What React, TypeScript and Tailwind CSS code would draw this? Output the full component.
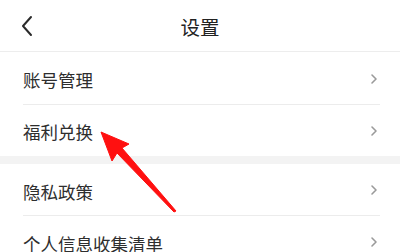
import { ReactNode } from 'react';

const font = { fontFamily: '"Noto Sans CJK SC", "Noto Sans", sans-serif' };

const Chevron = () => (
  <svg width="8" height="12" viewBox="0 0 8 12" className="shrink-0">
    <path d="M2 2 L6 6 L2 10" fill="none" stroke="#9a9a9a" strokeWidth="1.6" strokeLinecap="round" strokeLinejoin="round" />
  </svg>
);

const Row = ({ label, divider, h }: { label: ReactNode; divider?: boolean; h: string }) => (
  <div className={`flex items-center justify-between pl-[23px] pr-[22px] ${h} relative`}>
    <span className="text-[17.5px] text-[#2e2e2e] leading-none pt-[3px]">{label}</span>
    <Chevron />
    {divider && <div className="absolute bottom-0 left-[23px] right-[20px] h-px bg-[#ececec]" />}
  </div>
);

export default function App() {
  return (
    <div className="relative w-[400px] h-[252px] overflow-hidden bg-white" style={font}>
      <div className="flex items-center h-[52px] border-b border-[#ededed] relative">
        <svg width="14" height="22" viewBox="0 0 14 22" className="ml-[20px]">
          <path d="M11 2 L3 11 L11 20" fill="none" stroke="#2a2a2a" strokeWidth="2" strokeLinecap="round" strokeLinejoin="round" />
        </svg>
        <span className="absolute left-1/2 -translate-x-1/2 text-[19.5px] text-[#222222] leading-none pt-[2px]">设置</span>
      </div>
      <Row label="账号管理" divider h="h-[53px]" />
      <Row label="福利兑换" h="h-[51px]" />
      <div className="h-[8px] bg-[#f3f3f3]" />
      <Row label="隐私政策" divider h="h-[52px]" />
      <Row label="个人信息收集清单" h="h-[52px]" />

      <svg className="absolute left-0 top-0 pointer-events-none" width="400" height="252" viewBox="0 0 400 252">
        <polygon
          points="101,132 129,144 122,148 176,211 174,212 117,153 112,161"
          fill="#ff1010"
          stroke="#ff1010"
          strokeWidth="1"
          strokeLinejoin="round"
        />
      </svg>
    </div>
  );
}
